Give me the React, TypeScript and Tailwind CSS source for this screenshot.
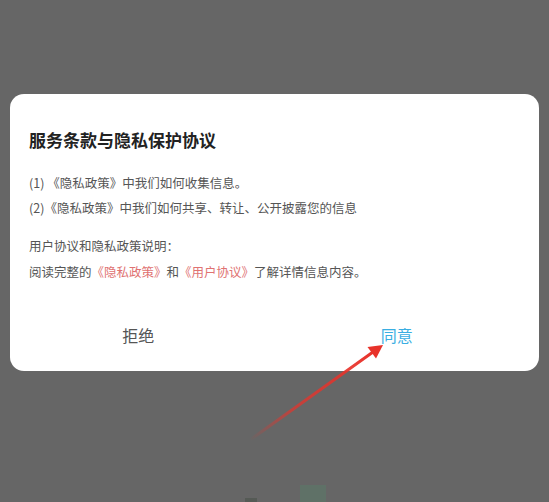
const font = { fontFamily: '"Noto Sans CJK SC", "Noto Sans", sans-serif' };

function Arrow() {
  return (
    <svg className="pointer-events-none absolute inset-0" width="549" height="502" viewBox="0 0 549 502">
      <defs>
        <linearGradient id="tail" x1="250" y1="440" x2="372" y2="353" gradientUnits="userSpaceOnUse">
          <stop offset="0" stopColor="#e8322a" stopOpacity="0" />
          <stop offset="0.35" stopColor="#e8322a" stopOpacity="0.7" />
          <stop offset="1" stopColor="#e8322a" />
        </linearGradient>
      </defs>
      <path d="M250 440 L373 352" stroke="url(#tail)" strokeWidth="3" strokeLinecap="round" />
      <polygon points="383,345 376,358.5 367.5,347" fill="#e8322a" />
    </svg>
  );
}

export default function App() {
  return (
    <div className="relative h-[502px] w-[549px] overflow-hidden bg-[#666666]" style={font}>
      <div className="absolute left-[245px] top-[498px] h-[4px] w-[12px] bg-[#555a55]" />
      <div className="absolute left-[300px] top-[485px] h-[17px] w-[26px] bg-[#5f7167]" />

      <div className="mx-[10px] mt-[94px] rounded-[14px] bg-white px-[19px] pt-[34px] pb-[24px]">
        <h2 className="h-6 text-[17px] font-bold leading-6 text-[#222222]">服务条款与隐私保护协议</h2>

        <div className="mt-[21px] space-y-[5px] text-[12.5px] leading-5 text-[#555555]">
          <p>(1) 《隐私政策》中我们如何收集信息。</p>
          <p>(2)《隐私政策》中我们如何共享、转让、公开披露您的信息</p>
        </div>

        <div className="mt-[18px] space-y-[6px] text-[12.5px] leading-5 text-[#555555]">
          <p>用户协议和隐私政策说明：</p>
          <p>
            阅读完整的<span className="text-[#e07272]">《隐私政策》</span>和
            <span className="text-[#e07272]">《用户协议》</span>了解详情信息内容。
          </p>
        </div>

        <div className="-mx-[19px] mt-[41px] flex text-[16px] leading-6">
          <button type="button" className="flex-1 pr-[2px] text-center text-[#555555]">
            拒绝
          </button>
          <button type="button" className="flex-1 pr-[14px] text-center text-[#3aaee2]">
            同意
          </button>
        </div>
      </div>

      <Arrow />
    </div>
  );
}
